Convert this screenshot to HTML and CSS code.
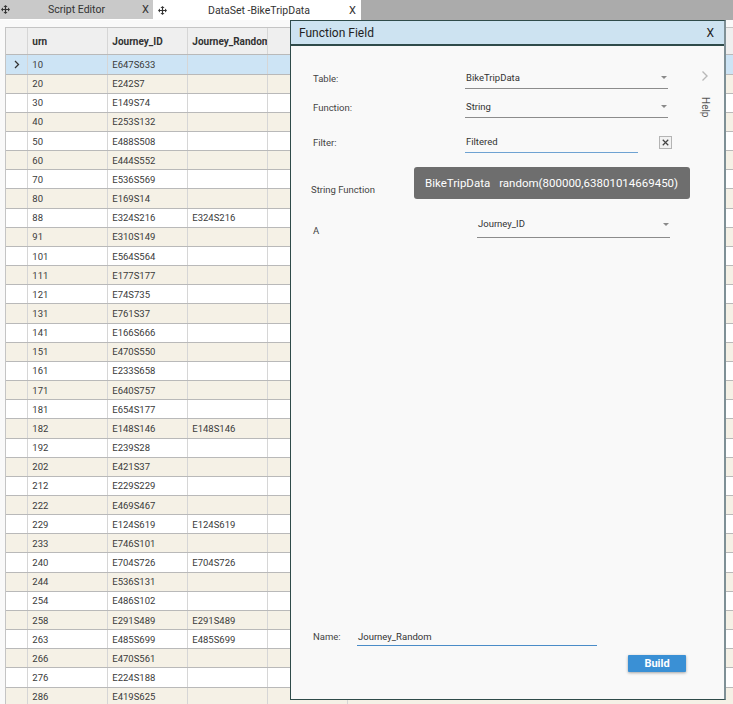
FILE: index.html
```html
<!DOCTYPE html>
<html>
<head>
<meta charset="utf-8">
<link rel="stylesheet" href="styles.css">
</head>
<body>
<div class="tabbar">
  <div class="tab tab-script">
    <svg class="tab-icon" viewBox="0 0 18 18"><path d="M9 2v14M2 9h14" stroke="#333" stroke-width="2.4"/><path d="M9 0l-4 4h8zM9 18l-4-4h8zM0 9l4-4v8zM18 9l-4-4v8z" fill="#333"/></svg>
    <span class="tab-label">Script Editor</span>
    <span class="tab-close">X</span>
  </div>
  <div class="tab tab-dataset">
    <svg class="tab-icon" viewBox="0 0 18 18"><path d="M9 2v14M2 9h14" stroke="#333" stroke-width="2.4"/><path d="M9 0l-4 4h8zM9 18l-4-4h8zM0 9l4-4v8zM18 9l-4-4v8z" fill="#333"/></svg>
    <span class="tab-label">DataSet -BikeTripData</span>
    <span class="tab-close">X</span>
  </div>
  <div class="tab-fill"></div>
</div>

<div class="main">
  <div class="grid">
    <div class="grow ghead">
      <div class="cell c0"></div>
      <div class="cell c1">urn</div>
      <div class="cell c2">Journey_ID</div>
      <div class="cell c3">Journey_Random</div>
      <div class="cell c4"></div>
      <div class="cell c5"></div>
    </div>
    <div class="grow sel"><div class="cell c0"><svg class="rowarrow" viewBox="0 0 6 9"><path d="M1 1l3.5 3.5L1 8" stroke="#333" stroke-width="1.3" fill="none"/></svg></div><div class="cell c1">10</div><div class="cell c2">E647S633</div><div class="cell c3"></div><div class="cell c4"></div><div class="cell c5"></div></div>
    <div class="grow alt"><div class="cell c0"></div><div class="cell c1">20</div><div class="cell c2">E242S7</div><div class="cell c3"></div><div class="cell c4"></div><div class="cell c5"></div></div>
    <div class="grow"><div class="cell c0"></div><div class="cell c1">30</div><div class="cell c2">E149S74</div><div class="cell c3"></div><div class="cell c4"></div><div class="cell c5"></div></div>
    <div class="grow alt"><div class="cell c0"></div><div class="cell c1">40</div><div class="cell c2">E253S132</div><div class="cell c3"></div><div class="cell c4"></div><div class="cell c5"></div></div>
    <div class="grow"><div class="cell c0"></div><div class="cell c1">50</div><div class="cell c2">E488S508</div><div class="cell c3"></div><div class="cell c4"></div><div class="cell c5"></div></div>
    <div class="grow alt"><div class="cell c0"></div><div class="cell c1">60</div><div class="cell c2">E444S552</div><div class="cell c3"></div><div class="cell c4"></div><div class="cell c5"></div></div>
    <div class="grow"><div class="cell c0"></div><div class="cell c1">70</div><div class="cell c2">E536S569</div><div class="cell c3"></div><div class="cell c4"></div><div class="cell c5"></div></div>
    <div class="grow alt"><div class="cell c0"></div><div class="cell c1">80</div><div class="cell c2">E169S14</div><div class="cell c3"></div><div class="cell c4"></div><div class="cell c5"></div></div>
    <div class="grow"><div class="cell c0"></div><div class="cell c1">88</div><div class="cell c2">E324S216</div><div class="cell c3">E324S216</div><div class="cell c4"></div><div class="cell c5"></div></div>
    <div class="grow alt"><div class="cell c0"></div><div class="cell c1">91</div><div class="cell c2">E310S149</div><div class="cell c3"></div><div class="cell c4"></div><div class="cell c5"></div></div>
    <div class="grow"><div class="cell c0"></div><div class="cell c1">101</div><div class="cell c2">E564S564</div><div class="cell c3"></div><div class="cell c4"></div><div class="cell c5"></div></div>
    <div class="grow alt"><div class="cell c0"></div><div class="cell c1">111</div><div class="cell c2">E177S177</div><div class="cell c3"></div><div class="cell c4"></div><div class="cell c5"></div></div>
    <div class="grow"><div class="cell c0"></div><div class="cell c1">121</div><div class="cell c2">E74S735</div><div class="cell c3"></div><div class="cell c4"></div><div class="cell c5"></div></div>
    <div class="grow alt"><div class="cell c0"></div><div class="cell c1">131</div><div class="cell c2">E761S37</div><div class="cell c3"></div><div class="cell c4"></div><div class="cell c5"></div></div>
    <div class="grow"><div class="cell c0"></div><div class="cell c1">141</div><div class="cell c2">E166S666</div><div class="cell c3"></div><div class="cell c4"></div><div class="cell c5"></div></div>
    <div class="grow alt"><div class="cell c0"></div><div class="cell c1">151</div><div class="cell c2">E470S550</div><div class="cell c3"></div><div class="cell c4"></div><div class="cell c5"></div></div>
    <div class="grow"><div class="cell c0"></div><div class="cell c1">161</div><div class="cell c2">E233S658</div><div class="cell c3"></div><div class="cell c4"></div><div class="cell c5"></div></div>
    <div class="grow alt"><div class="cell c0"></div><div class="cell c1">171</div><div class="cell c2">E640S757</div><div class="cell c3"></div><div class="cell c4"></div><div class="cell c5"></div></div>
    <div class="grow"><div class="cell c0"></div><div class="cell c1">181</div><div class="cell c2">E654S177</div><div class="cell c3"></div><div class="cell c4"></div><div class="cell c5"></div></div>
    <div class="grow alt"><div class="cell c0"></div><div class="cell c1">182</div><div class="cell c2">E148S146</div><div class="cell c3">E148S146</div><div class="cell c4"></div><div class="cell c5"></div></div>
    <div class="grow"><div class="cell c0"></div><div class="cell c1">192</div><div class="cell c2">E239S28</div><div class="cell c3"></div><div class="cell c4"></div><div class="cell c5"></div></div>
    <div class="grow alt"><div class="cell c0"></div><div class="cell c1">202</div><div class="cell c2">E421S37</div><div class="cell c3"></div><div class="cell c4"></div><div class="cell c5"></div></div>
    <div class="grow"><div class="cell c0"></div><div class="cell c1">212</div><div class="cell c2">E229S229</div><div class="cell c3"></div><div class="cell c4"></div><div class="cell c5"></div></div>
    <div class="grow alt"><div class="cell c0"></div><div class="cell c1">222</div><div class="cell c2">E469S467</div><div class="cell c3"></div><div class="cell c4"></div><div class="cell c5"></div></div>
    <div class="grow"><div class="cell c0"></div><div class="cell c1">229</div><div class="cell c2">E124S619</div><div class="cell c3">E124S619</div><div class="cell c4"></div><div class="cell c5"></div></div>
    <div class="grow alt"><div class="cell c0"></div><div class="cell c1">233</div><div class="cell c2">E746S101</div><div class="cell c3"></div><div class="cell c4"></div><div class="cell c5"></div></div>
    <div class="grow"><div class="cell c0"></div><div class="cell c1">240</div><div class="cell c2">E704S726</div><div class="cell c3">E704S726</div><div class="cell c4"></div><div class="cell c5"></div></div>
    <div class="grow alt"><div class="cell c0"></div><div class="cell c1">244</div><div class="cell c2">E536S131</div><div class="cell c3"></div><div class="cell c4"></div><div class="cell c5"></div></div>
    <div class="grow"><div class="cell c0"></div><div class="cell c1">254</div><div class="cell c2">E486S102</div><div class="cell c3"></div><div class="cell c4"></div><div class="cell c5"></div></div>
    <div class="grow alt"><div class="cell c0"></div><div class="cell c1">258</div><div class="cell c2">E291S489</div><div class="cell c3">E291S489</div><div class="cell c4"></div><div class="cell c5"></div></div>
    <div class="grow"><div class="cell c0"></div><div class="cell c1">263</div><div class="cell c2">E485S699</div><div class="cell c3">E485S699</div><div class="cell c4"></div><div class="cell c5"></div></div>
    <div class="grow alt"><div class="cell c0"></div><div class="cell c1">266</div><div class="cell c2">E470S561</div><div class="cell c3"></div><div class="cell c4"></div><div class="cell c5"></div></div>
    <div class="grow"><div class="cell c0"></div><div class="cell c1">276</div><div class="cell c2">E224S188</div><div class="cell c3"></div><div class="cell c4"></div><div class="cell c5"></div></div>
    <div class="grow alt"><div class="cell c0"></div><div class="cell c1">286</div><div class="cell c2">E419S625</div><div class="cell c3"></div><div class="cell c4"></div><div class="cell c5"></div></div>
  </div>
</div>

<div class="dialog">
  <div class="dlg-head">
    <span class="dlg-title">Function Field</span>
    <span class="dlg-close">X</span>
  </div>
  <div class="dlg-body">
    <div class="top">
      <div class="fields">
        <div class="frow r-table">
          <span class="flabel">Table:</span>
          <div class="select"><span>BikeTripData</span><span class="caret"></span></div>
        </div>
        <div class="frow r-function">
          <span class="flabel">Function:</span>
          <div class="select"><span>String</span><span class="caret"></span></div>
        </div>
        <div class="frow r-filter">
          <span class="flabel">Filter:</span>
          <div class="input filter-input">Filtered</div>
          <span class="xbox"><svg viewBox="0 0 10 10"><path d="M2.5 2.5l5 5M7.5 2.5l-5 5" stroke="#444" stroke-width="1.1"/></svg></span>
        </div>
        <div class="frow r-strfn">
          <span class="flabel strfn">String Function</span>
        </div>
        <div class="frow r-a">
          <span class="flabel alabel">A</span>
          <div class="select select-a"><span>Journey_ID</span><span class="caret"></span></div>
        </div>
      </div>
      <div class="side">
        <svg class="chev" viewBox="0 0 8 12"><path d="M1.5 1.5l4.5 4.5-4.5 4.5" stroke="#b8b8b8" stroke-width="1.4" fill="none"/></svg>
        <span class="help">Help</span>
      </div>
    </div>
    <div class="name-row">
      <span class="name-label">Name:</span>
      <div class="input name-input">Journey_Random</div>
    </div>
    <div class="actions">
      <button class="build">Build</button>
    </div>
  </div>
  <div class="tooltip"><span>BikeTripData</span><span class="tip-expr">random(800000,63801014669450)</span></div>
</div>
</body>
</html>
```
FILE: styles.css
```css
* { box-sizing: border-box; margin: 0; padding: 0; }
html, body { width: 733px; height: 704px; overflow: hidden; }
body {
  font-family: Roboto, "Liberation Sans", sans-serif;
  background: #f9f9f9;
  color: #333;
  position: relative;
}

/* tabs */
.tabbar { display: flex; height: 20px; background: #fff; }
.tab { display: flex; align-items: center; font-size: 10.5px; color: #333; }
.tab-script { width: 153px; height: 19px; background: #c9c9c9; }
.tab-dataset { width: 208px; height: 20px; background: #fff; }
.tab-fill { flex: 1; background: #ababab; }
.tab-icon { width: 9px; height: 9px; flex: none; }
.tab-script .tab-icon { margin-left: 1px; }
.tab-script .tab-label { margin-left: 38px; }
.tab-dataset .tab-icon { margin-left: 5px; }
.tab-dataset .tab-label { margin-left: 41px; }
.tab-close { margin-left: auto; margin-right: 4px; font-size: 11px; }
.tab-dataset .tab-close { margin-right: 5px; }

/* grid */
.main { padding: 7px 0 0 5px; }
.grid { width: 760px; border-top: 1px solid #c4c4c4; border-left: 1px solid #c4c4c4; }
.grow {
  display: flex;
  height: 19.17px;
  border-bottom: 1px solid #b9b9b9;
  background: #fff;
}
.grow.alt { background: #f5f1e6; }
.grow.sel { background: #cde4f5; }
.ghead { height: 27.4px; background: #efefef; font-weight: bold; font-size: 10px; color: #333; }
.cell {
  display: flex;
  align-items: center;
  padding-left: 4px;
  border-right: 1px solid #d6d6d6;
  white-space: nowrap;
  overflow: hidden;
  font-size: 9.5px;
  color: #3a3a3a;
}
.ghead .cell { font-size: 10px; color: #333; padding-top: 1px; }
.c0 { width: 22.3px; padding-left: 0; justify-content: center; }
.c1, .c2, .c3, .c4 { width: 80px; }
.c5 { flex: 1; }
.rowarrow { width: 6px; height: 9px; margin-left: 1px; }

/* dialog */
.dialog {
  position: absolute;
  left: 290px;
  top: 20px;
  width: 436px;
  height: 680px;
  background: #f9f9f9;
  border: 1px solid #2f4b4a;
  border-right: 2px solid #7f9096;
  display: flex;
  flex-direction: column;
}
.dlg-head {
  height: 25px;
  flex: none;
  background: #cde3f1;
  border-bottom: 2px solid #2f4b4a;
  display: flex;
  align-items: center;
  justify-content: space-between;
  padding: 0 10px 0 8px;
  font-size: 12px;
  color: #222;
}
.dlg-close { font-size: 12px; }
.dlg-body { flex: 1; display: flex; flex-direction: column; padding-left: 22px; }
.top { display: flex; }
.fields { width: 368px; padding-top: 21px; }
.frow { display: flex; align-items: center; height: 22px; }
.r-function { margin-top: 7px; }
.r-filter { margin-top: 13px; }
.r-strfn { margin-top: 26px; height: 20px; }
.r-a { margin-top: 13px; height: 26px; align-items: stretch; }
.flabel { width: 152px; flex: none; font-size: 9.5px; color: #444; }
.strfn { margin-left: -2px; }
.alabel { align-self: flex-end; line-height: 14px; }
.select {
  width: 203px;
  height: 22px;
  display: flex;
  align-items: center;
  justify-content: space-between;
  border-bottom: 1px solid #8c8c8c;
  font-size: 9.5px;
  color: #333;
  padding-left: 1px;
  padding-right: 1px;
}
.select-a { width: 193px; height: 26px; margin-left: 12px; align-items: flex-start; padding-top: 4px; line-height: 16px; }
.select-a .caret { margin-top: 7px; }
.caret {
  width: 0; height: 0;
  border-left: 3.5px solid transparent;
  border-right: 3.5px solid transparent;
  border-top: 3.5px solid #8a8a8a;
}
.input { font-size: 9.5px; color: #333; padding-left: 1px; }
.filter-input {
  width: 173px;
  height: 22px;
  display: flex;
  align-items: center;
  border-bottom: 1px solid #6ea2d2;
}
.xbox {
  width: 13px; height: 13px;
  margin-left: 21px;
  border: 1px solid #b4b4b4;
  background: #f2f2f2;
  display: flex;
}
.xbox svg { width: 11px; height: 11px; }
.side { margin-left: 18px; padding-top: 24px; display: flex; flex-direction: column; align-items: center; width: 12px; }
.chev { width: 8px; height: 12px; }
.help { writing-mode: vertical-rl; font-size: 10px; color: #555; margin-top: 15px; }

.name-row { margin-top: auto; display: flex; align-items: center; }
.name-label { width: 44px; font-size: 9.5px; color: #444; }
.name-input {
  width: 240px;
  height: 19px;
  display: flex;
  align-items: center;
  border-bottom: 1px solid #4a8cc8;
}
.actions { display: flex; justify-content: flex-end; margin-top: 9px; margin-bottom: 27px; padding-right: 38px; }
.build {
  width: 58px;
  height: 17px;
  background: #3a90d5;
  color: #fff;
  font-family: Roboto, "Liberation Sans", sans-serif;
  font-weight: bold;
  font-size: 11px;
  border: none;
  border-radius: 1px;
  box-shadow: 0 1px 3px rgba(0,0,0,0.35);
}

.tooltip {
  position: absolute;
  left: 123px;
  top: 146px;
  width: 276px;
  height: 32px;
  background: #6e6e6e;
  border-radius: 3px;
  color: #fff;
  font-size: 11.5px;
  display: flex;
  align-items: center;
  padding-left: 11px;
}
.tip-expr { margin-left: 9px; }
```
